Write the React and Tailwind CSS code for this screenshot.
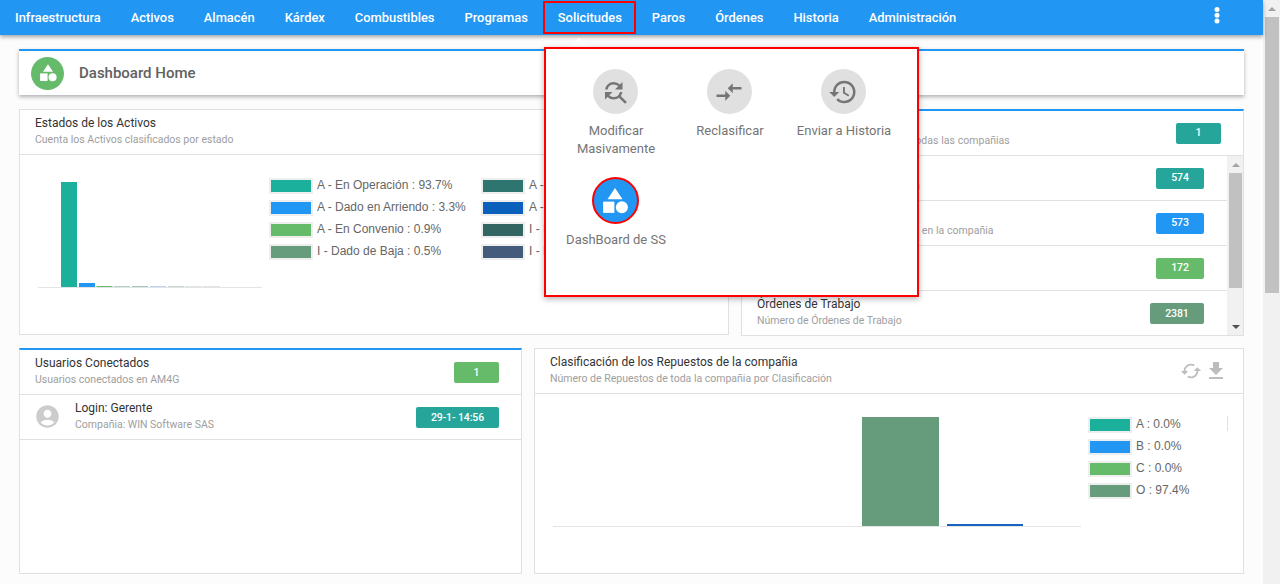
import React from "react";
import { MdFindReplace, MdCompareArrows, MdHistory, MdAccountCircle, MdCached, MdFileDownload } from "react-icons/md";

const nav = ["Infraestructura","Activos","Almacén","Kárdex","Combustibles","Programas","Solicitudes","Paros","Órdenes","Historia","Administración"];

function Shapes({ className }) {
  return (
    <svg viewBox="0 0 24 24" className={className} fill="#fff">
      <path d="M12 1.5 L18 10.5 H6 Z" />
      <rect x="2.5" y="12.5" width="9" height="9" />
      <circle cx="17.5" cy="17" r="4.8" />
    </svg>
  );
}

function Badge({ color, className, children }) {
  return (
    <div className={`flex h-[21px] items-center justify-center rounded-[2px] text-[10.5px] font-medium tracking-[-0.1px] text-white ${color} ${className}`}>
      {children}
    </div>
  );
}

function Heading({ title, sub, className = "", subClassName = "" }) {
  return (
    <div className={`min-w-0 whitespace-nowrap ${className}`}>
      <div className="text-[12px] leading-[16px] text-[#333]">{title}</div>
      <div className={`mt-[1px] text-[10.5px] leading-[16px] text-[#9e9e9e] ${subClassName}`}>{sub}</div>
    </div>
  );
}

function LegendItem({ color, text }) {
  return (
    <div className="flex h-[22px] items-center">
      <span className={`h-[16px] w-[44px] shrink-0 border-2 border-[#eeeeee] ${color}`} />
      <span className="ml-[4px] whitespace-nowrap pb-[2px] font-['Liberation_Sans',Arial,sans-serif] text-[12px] text-[#666]">{text}</span>
    </div>
  );
}

function Row({ title, sub, badge, color, badgeW, subClassName }) {
  return (
    <div className="flex h-[45px] items-center justify-between border-b border-[#e0e0e0] pb-[2px] pl-[15px] pr-[23px] last:border-b-0">
      <Heading title={title} sub={sub} subClassName={subClassName} />
      <Badge color={color} className={`${badgeW} mt-[2px]`}>{badge}</Badge>
    </div>
  );
}

function MenuItem({ icon, label, active }) {
  return (
    <div className="flex w-[114px] flex-col items-center">
      <div className={`flex h-[47px] w-[47px] items-center justify-center rounded-full ${active ? "border-2 border-[#ff0000] bg-[#2196f3]" : "border border-transparent bg-clip-padding bg-[#e0e0e0]"}`}>
        {icon}
      </div>
      <div className="mt-[7px] pl-[2px] text-center text-[13px] leading-[18px] text-[#757575]">{label}</div>
    </div>
  );
}

export default function App() {
  return (
    <div className="relative flex h-[584px] w-[1280px] overflow-hidden bg-[#fcfcfc] font-[Roboto,sans-serif]">
      <div className="w-[1263px] shrink-0">
        <header className="relative z-10 flex h-[35px] items-center justify-between bg-[#2196f3] shadow-[0_2px_4px_rgba(0,0,0,0.35)]">
          <nav className="flex">
            {nav.map((n) => (
              <div key={n} className="px-[15px] text-[12.9px] font-medium leading-[35px] text-white">{n}</div>
            ))}
          </nav>
          <svg viewBox="0 0 6 17" className="mr-[43px] mb-[5px] h-[17px] w-[6px]" fill="#fff">
            <circle cx="3" cy="2.6" r="2.5" /><circle cx="3" cy="8.3" r="2.5" /><circle cx="3" cy="14" r="2.5" />
          </svg>
        </header>

        <main className="flex flex-col px-[19px] pt-[14px]">
          <section className="flex h-[46px] items-center border-t-2 border-[#2196f3] bg-white pl-[12px] shadow-[0_2px_4px_rgba(0,0,0,0.3)]">
            <div className="flex h-[33px] w-[33px] items-center justify-center rounded-full bg-[#66bb6a]">
              <Shapes className="h-[20px] w-[20px]" />
            </div>
            <div className="ml-[15px] text-[15px] font-medium text-[#616161]">Dashboard Home</div>
          </section>

          <div className="mt-[14px] grid grid-cols-[710px_503px] gap-x-[12px]">
            <section className="flex h-[226px] flex-col border border-[#e0e0e0] bg-white">
              <div className="flex h-[45px] shrink-0 items-center border-b border-[#e0e0e0] pb-[2px] pl-[15px]">
                <Heading title="Estados de los Activos" sub="Cuenta los Activos clasificados por estado" />
              </div>
              <div className="flex pl-[18px] pt-[20px]">
                <svg viewBox="0 0 224 114" className="h-[114px] w-[224px] shrink-0">
                  <rect x="23" y="7" width="16" height="105" fill="#1ab09b" />
                  <rect x="41" y="108" width="16" height="4" fill="#2196f3" />
                  <rect x="58.5" y="111" width="16" height="1" fill="#66bb6a" />
                  <rect x="76" y="111" width="16" height="1" fill="#b5d0c2" />
                  <rect x="94" y="111" width="16" height="1" fill="#a5c5bf" />
                  <rect x="112" y="111" width="16" height="1" fill="#b8d2f0" />
                  <rect x="130" y="111" width="16" height="1" fill="#c5d8d2" />
                  <rect x="147" y="111" width="17" height="1" fill="#dfe3ea" />
                  <rect x="165" y="111" width="17" height="1" fill="#e3e3e3" />
                  <rect x="0" y="112" width="224" height="1" fill="#e4e4e4" />
                </svg>
                <div className="ml-[7px] grid h-fit grid-cols-[212px_auto]">
                  <LegendItem color="bg-[#1ab09b]" text="A - En Operación : 93.7%" />
                  <LegendItem color="bg-[#2e7570]" text="A - En Reparación : 0.5%" />
                  <LegendItem color="bg-[#2196f3]" text="A - Dado en Arriendo : 3.3%" />
                  <LegendItem color="bg-[#0b60bb]" text="A - En Préstamo : 0.4%" />
                  <LegendItem color="bg-[#66bb6a]" text="A - En Convenio : 0.9%" />
                  <LegendItem color="bg-[#336662]" text="I - Inactivo : 0.3%" />
                  <LegendItem color="bg-[#669c7b]" text="I - Dado de Baja : 0.5%" />
                  <LegendItem color="bg-[#445b7b]" text="I - Retirado : 0.2%" />
                </div>
              </div>
            </section>

            <section className="flex h-[227px] flex-col border border-t-2 border-[#e0e0e0] border-t-[#2196f3] bg-white">
              <div className="flex h-[45px] shrink-0 items-center justify-between border-b border-[#e0e0e0] pl-[15px] pr-[22px]">
                <Heading title="Compañías" sub="Número de sedes registradas en todas las compañias" className="pb-[2px]" subClassName="tracking-[0.04px]" />
                <Badge color="bg-[#26a69a]" className="w-[45px]">1</Badge>
              </div>
              <div className="flex min-h-0 flex-1">
                <div className="min-w-0 flex-1">
                  <Row title="Activos" sub="Número de Activos de la compañia" badge="574" color="bg-[#26a69a]" badgeW="w-[48px]" />
                  <Row title="Activos Operativos" sub="Número de los Activos registrados en la compañia" badge="573" color="bg-[#2196f3]" badgeW="w-[48px]" subClassName="tracking-[0.04px]" />
                  <Row title="Repuestos" sub="Número de Repuestos" badge="172" color="bg-[#66bb6a]" badgeW="w-[48px]" />
                  <Row title="Órdenes de Trabajo" sub="Número de Órdenes de Trabajo" badge="2381" color="bg-[#669c7b]" badgeW="w-[54px]" />
                </div>
                <div className="flex w-[16px] shrink-0 flex-col items-center bg-[#f1f1f1] pl-[2px] pr-[1px]">
                  <div className="flex h-[17px] items-center"><div className="h-0 w-0 border-x-[4px] border-b-[4px] border-x-transparent border-b-[#a3a3a3]" /></div>
                  <div className="h-[115px] w-full bg-[#c1c1c1]" />
                  <div className="mt-auto flex h-[17px] items-center"><div className="h-0 w-0 border-x-[4px] border-t-[4px] border-x-transparent border-t-[#505050]" /></div>
                </div>
              </div>
            </section>
          </div>

          <div className="mt-[12px] grid grid-cols-[503px_710px] gap-x-[12px]">
            <section className="flex h-[226px] flex-col border border-t-2 border-[#e0e0e0] border-t-[#2196f3] bg-white">
              <div className="flex h-[45px] shrink-0 items-center justify-between border-b border-[#e0e0e0] pl-[15px] pr-[22px]">
                <Heading title="Usuarios Conectados" sub="Usuarios conectados en AM4G" className="pb-[1px]" />
                <Badge color="bg-[#66bb6a]" className="mt-[1px] w-[45px]">1</Badge>
              </div>
              <div className="flex h-[45px] shrink-0 items-center justify-between border-b border-[#e0e0e0] pb-[1px] pl-[14px] pr-[22px]">
                <div className="flex items-center">
                  <MdAccountCircle className="h-[27px] w-[27px] text-[#cccccc]" />
                  <Heading title="Login: Gerente" sub="Compañia: WIN Software SAS" className="ml-[14px]" />
                </div>
                <Badge color="bg-[#26a69a]" className="mt-[2px] w-[83px]">29-1- 14:56</Badge>
              </div>
            </section>

            <section className="flex h-[226px] flex-col border border-[#e0e0e0] bg-white">
              <div className="flex h-[45px] shrink-0 items-center justify-between border-b border-[#e0e0e0] pl-[15px] pr-[15px]">
                <Heading title="Clasificación de los Repuestos de la compañia" sub="Número de Repuestos de toda la compañia por Clasificación" className="pb-[2px]" />
                <div className="flex items-center text-[#bdbdbd]">
                  <MdCached className="h-[22px] w-[22px]" />
                  <MdFileDownload className="ml-[2px] h-[24px] w-[24px]" />
                </div>
              </div>
              <div className="flex pl-[18px] pt-[22px]">
                <svg viewBox="0 0 528 112" className="h-[112px] w-[528px] shrink-0">
                  <rect x="309" y="1" width="77" height="109" fill="#669c7b" />
                  <rect x="394" y="108" width="76" height="2" fill="#1565c0" />
                  <rect x="0" y="110" width="528" height="1" fill="#e4e4e4" />
                </svg>
                <div className="-mt-[2px] ml-[7px] flex-1">
                  <LegendItem color="bg-[#1ab09b]" text="A : 0.0%" />
                  <LegendItem color="bg-[#2196f3]" text="B : 0.0%" />
                  <LegendItem color="bg-[#66bb6a]" text="C : 0.0%" />
                  <LegendItem color="bg-[#669c7b]" text="O : 97.4%" />
                </div>
                <div className="mr-[15px] h-[15px] w-px bg-[#e0e0e0]" />
              </div>
            </section>
          </div>
        </main>
      </div>

      <aside className="flex w-[17px] shrink-0 flex-col items-center bg-[#f1f1f1] pl-[2px] pr-[1px]">
        <div className="flex h-[17px] items-center"><div className="h-0 w-0 border-x-[4px] border-b-[4px] border-x-transparent border-b-[#a3a3a3]" /></div>
        <div className="h-[276px] w-full bg-[#c1c1c1]" />
      </aside>

      <div className="absolute left-[543px] top-[1px] z-20 h-[33px] w-[93px] border-2 border-[#ff0000]" />
      <div className="absolute left-[568px] top-[38px] z-20 h-0 w-0 border-x-[11px] border-b-[9px] border-x-transparent border-b-white" />
      <div className="absolute left-[544px] top-[47px] z-20 h-[250px] w-[375px] border-2 border-[#ff0000] bg-white shadow-[0_2px_6px_rgba(0,0,0,0.3)]">
        <div className="flex flex-wrap gap-y-[19px] pl-[12px] pt-[19px]">
          <MenuItem label={<>Modificar<br />Masivamente</>} icon={<MdFindReplace className="h-[30px] w-[30px] text-[#757575]" />} />
          <MenuItem label="Reclasificar" icon={<MdCompareArrows className="h-[30px] w-[30px] text-[#757575]" />} />
          <MenuItem label="Enviar a Historia" icon={<MdHistory className="h-[30px] w-[30px] text-[#757575]" />} />
          <MenuItem active label="DashBoard de SS" icon={<Shapes className="h-[30px] w-[30px]" />} />
        </div>
      </div>
    </div>
  );
}
